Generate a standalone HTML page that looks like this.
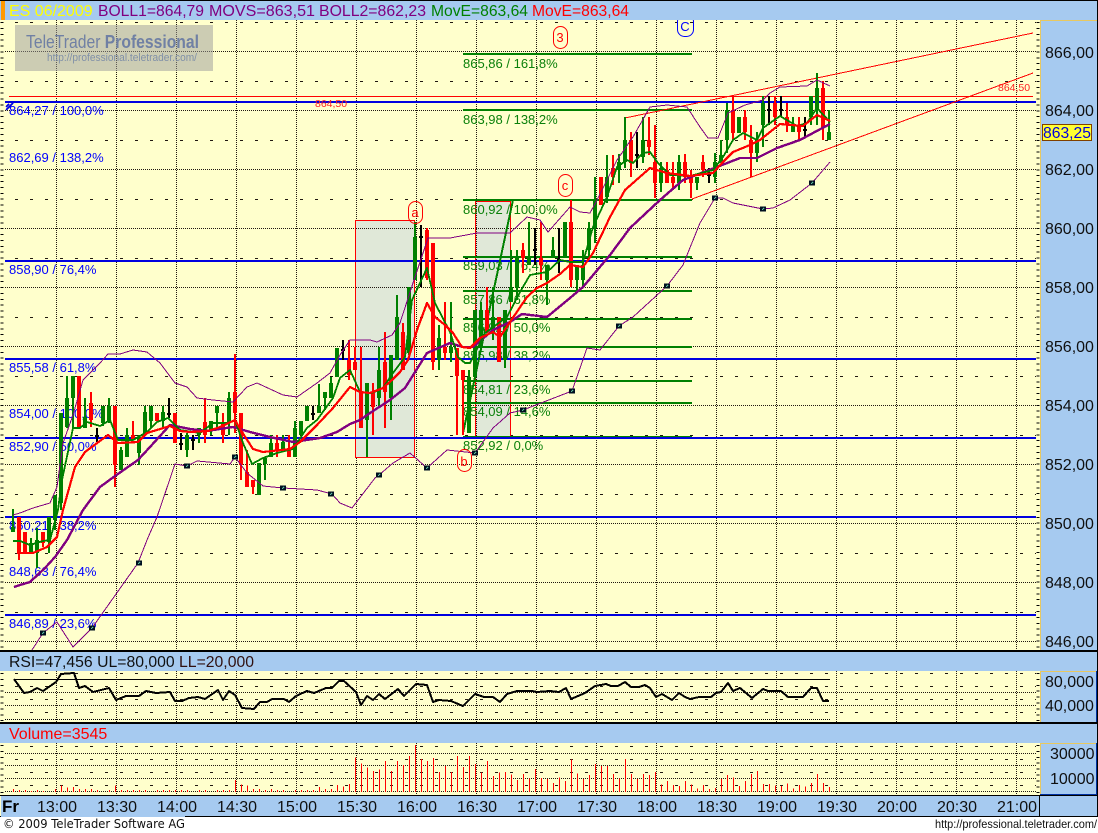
<!DOCTYPE html>
<html><head><meta charset="utf-8"><title>ES 06/2009</title>
<style>
html,body{margin:0;padding:0;background:#fff;}
svg{display:block;}
text{font-family:"Liberation Sans",sans-serif;}
.l{fill:none;shape-rendering:crispEdges;}
.s{fill:none;shape-rendering:crispEdges;stroke-linejoin:round;}
</style></head><body>
<svg width="1098" height="833" viewBox="0 0 1098 833" xmlns="http://www.w3.org/2000/svg">
<rect width="1098" height="833" fill="#fff"/>
<rect x="0" y="0" width="1098" height="817" fill="#FFFFCC"/>
<!-- main grid -->
<path class="l" stroke="#201810" stroke-dasharray="1 1" d="M56.5 20V650M116.5 20V650M176.5 20V650M236.5 20V650M296.5 20V650M356.5 20V650M416.5 20V650M476.5 20V650M536.5 20V650M596.5 20V650M656.5 20V650M716.5 20V650M776.5 20V650M836.5 20V650M896.5 20V650M956.5 20V650M1016.5 20V650M5 51.5H1036M5 110.5H1036M5 169.5H1036M5 228.5H1036M5 287.5H1036M5 346.5H1036M5 405.5H1036M5 464.5H1036M5 523.5H1036M5 582.5H1036M5 641.5H1036"/>
<path class="l" stroke="#201810" stroke-dasharray="3 12" d="M15 22.5H1036M15 81.5H1036M15 140.5H1036M15 199.5H1036M15 258.5H1036M15 317.5H1036M15 376.5H1036M15 435.5H1036M15 494.5H1036M15 553.5H1036M15 612.5H1036"/>
<line class="l" x1="2" y1="22" x2="2" y2="650" stroke="#000" stroke-width="3" stroke-dasharray="1 4.89"/>
<line class="l" x1="1038" y1="22" x2="1038" y2="650" stroke="#000" stroke-width="3" stroke-dasharray="1 4.89"/>
<!-- watermark -->
<rect x="15" y="25" width="198" height="46" fill="#999" opacity=".5"/>
<text x="26" y="48" font-size="18" fill="#7080A4" textLength="173" lengthAdjust="spacingAndGlyphs">TeleTrader <tspan font-weight="bold">Professional</tspan></text>
<text x="47" y="61" font-size="11" fill="#8090A8" textLength="150" lengthAdjust="spacingAndGlyphs">http://professional.teletrader.com/</text>
<!-- shaded rectangles -->
<rect x="355.5" y="220.5" width="59" height="237" fill="#E0E8D8" stroke="#FF0000" shape-rendering="crispEdges"/>
<rect x="475.5" y="201.5" width="35" height="235" fill="#E0E8D8" stroke="#FF0000" shape-rendering="crispEdges"/>
<path class="l" stroke="#201810" stroke-dasharray="1 1" d="M416.5 220V457M476.5 201V437M356 228.5H414M356 287.5H414M356 346.5H414M356 405.5H414M476 228.5H510M476 287.5H510M476 346.5H510M476 405.5H510"/>
<!-- fib labels blue -->
<g font-size="13" fill="#0000FF">
<text x="9" y="115">864,27 / 100,0%</text>
<text x="9" y="162">862,69 / 138,2%</text>
<text x="9" y="274">858,90 / 76,4%</text>
<text x="9" y="372">855,58 / 61,8%</text>
<text x="9" y="418">854,00 / 100,0%</text>
<text x="9" y="451">852,90 / 50,0%</text>
<text x="9" y="530">850,21 / 38,2%</text>
<text x="9" y="576">848,63 / 76,4%</text>
<text x="9" y="628">846,89 / 23,6%</text>
</g>
<!-- fib labels green -->
<g font-size="13" fill="#0A800A">
<text x="463" y="68">865,86 / 161,8%</text>
<text x="463" y="124">863,98 / 138,2%</text>
<text x="463" y="214">860,92 / 100,0%</text>
<text x="463" y="270">859,03 / 76,4%</text>
<text x="463" y="304">857,86 / 61,8%</text>
<text x="463" y="332">856,92 / 50,0%</text>
<text x="463" y="360">855,98 / 38,2%</text>
<text x="463" y="394">854,81 / 23,6%</text>
<text x="463" y="416">854,09 / 14,6%</text>
<text x="463" y="450">852,92 / 0,0%</text>
</g>
<!-- fib lines -->
<path class="l" stroke="#008000" stroke-width="2" d="M463 54H692M463 110H692M463 200H692M463 257H692M463 291H692M463 319H692M463 347H692M463 381H692M463 403H692M463 437H692"/>
<!-- blue lines -->
<path class="l" stroke="#0000E0" stroke-width="2" d="M5 102H1036M5 261H1036M5 359H1036M5 438H1036M5 517H1036M5 615H1036"/>
<path class="l" stroke="#0000E0" stroke-width="2" d="M6 110L13 103M6 107L9 104"/>
<!-- red lines -->
<path class="l" stroke="#FF0000" d="M9 96.5H1033M625 118L1033 33M692 199L1033 73"/>
<path class="l" stroke="#008000" stroke-width="2" d="M463 433L513 200"/>
<text x="315" y="107" font-size="10.5" fill="#FF2020">864,50</text>
<text x="998" y="91" font-size="10.5" fill="#FF2020">864,50</text>
<!-- candles: wicks -->
<path class="l" stroke="#008000" stroke-width="2" d="M13 509V532M31 538V553M37 528V568M49 517V553M55 495V530M61 413V510M67 376V428M73 376V428M85 398V428M103 406V426M109 398V423M121 447V470M127 428V457M139 435V465M145 406V435M151 406V428M163 406V428M187 433V457M199 428V443M211 421V435M217 406V428M229 392V435M259 463V495M265 458V480M271 435V457M283 435V450M295 421V457M301 421V435M307 406V421M319 384V413M325 392V410M331 377V398M337 348V377M367 383V457M379 347V407M391 355V420M397 295V360M409 287V355M415 222V280M439 325V370M451 302V362M469 370V433M475 310V377M481 302V347M493 287V340M505 310V368M511 250V302M517 250V300M529 222V265M547 265V305M553 237V258M565 222V258M577 265V290M583 250V287M589 222V258M595 177V243M607 155V203M619 154V183M625 117V168M643 117V163M661 162V192M679 155V190M697 177V190M715 153V183M721 140V163M727 103V153M739 117V133M757 132V162M763 96V147M793 117V132M811 96V125M817 73V125M829 110V140"/>
<path class="l" stroke="#008000" stroke-width="4" d="M13 527V532M31 543V553M37 540V553M49 517V542M55 495V520M61 413V503M67 398V427M73 376V398M85 417V428M103 406V423M109 406V422M121 450V470M127 435V457M139 437V453M145 412V433M151 406V421M163 412V421M187 435V450M199 428V435M211 421V430M217 406V413M229 398V423M259 463V495M265 458V464M271 443V457M283 442V450M295 428V457M301 421V435M307 406V421M319 406V413M325 392V398M331 383V398M337 348V377M367 383V420M379 370V398M391 355V398M397 317V360M409 287V353M415 237V280M439 338V360M451 347V353M469 377V433M475 310V377M481 310V347M493 317V333M505 310V360M511 287V302M517 258V288M529 258V265M547 265V280M553 250V258M565 222V258M577 265V280M583 265V280M589 228V250M595 200V228M607 177V197M619 162V170M625 140V162M643 140V157M661 168V183M679 162V183M697 177V183M715 162V177M721 155V163M727 110V140M739 117V133M757 140V153M763 103V125M793 125V132M811 96V117M817 88V110M829 132V140"/>
<path class="l" stroke="#FF0000" stroke-width="2" d="M19 517V560M25 532V553M43 532V547M79 376V428M91 392V427M115 406V487M133 421V440M157 413V421M175 413V443M205 398V443M223 413V443M235 354V433M241 413V480M247 450V487M253 480V494M277 435V457M289 435V457M349 340V380M355 347V370M361 347V428M373 383V435M385 332V428M403 323V370M427 228V280M433 243V370M445 302V360M457 348V435M463 370V435M487 287V333M499 317V362M523 243V273M541 222V280M571 200V287M601 177V205M613 155V185M631 132V177M649 117V155M655 125V198M667 162V183M673 162V190M685 154V183M691 170V198M703 155V177M733 96V140M745 110V140M751 125V177M775 96V125M787 103V132M799 117V140M823 81V140"/>
<path class="l" stroke="#FF0000" stroke-width="4" d="M19 517V553M25 532V553M43 532V543M79 376V428M91 403V420M115 406V465M133 435V440M157 413V421M175 413V443M205 422V435M223 422V435M235 392V413M241 413V465M247 472V487M253 480V487M277 443V450M289 450V457M349 360V375M355 362V370M361 392V428M373 392V407M385 362V392M403 332V370M427 230V278M433 243V362M445 347V353M457 348V376M463 370V380M487 310V332M499 317V362M523 250V258M541 258V265M571 222V280M601 177V205M613 168V177M631 140V163M649 140V147M655 162V183M667 170V183M673 177V183M685 162V177M691 177V183M703 162V170M733 110V133M745 117V132M751 140V153M775 103V117M787 117V125M799 125V132M823 88V128"/>
<path class="l" stroke="#000" stroke-width="2" d="M97 428V442M169 398V418M181 433V450M193 435V450M313 406V420M343 340V360M421 225V287M535 228V265M559 228V273M637 132V168M709 168V183M769 96V125M781 96V117M805 117V138"/>
<path class="l" stroke="#000" stroke-width="2" d="M95 436H99M167 414H171M179 444H183M191 440H195M311 414H315M341 350H345M419 237H423M533 250H537M557 260H561M635 155H639M707 175H711M767 110H771M779 110H783M803 130H807"/>
<!-- bollinger -->
<path class="s" stroke="#800080" d="M13 515L20 513L33 508L50 503L57 487L63 443L73 415L83 380L100 363L108 354L120 354L133 350L147 352L160 363L175 383L187 387L197 398L213 400L233 402L247 387L257 383L283 395L297 397L317 383L330 373L340 355L350 340L370 340L377 342L392 335L400 323L413 283L428 238L450 238L477 233L510 233L527 217L540 220L548 232L570 207L580 212L590 213L597 200L606 182L617 160L633 137L650 107L667 105L687 107L700 127L708 138L718 138L728 113L745 105L763 100L770 93L780 87L807 86L817 80L830 86"/>
<path class="s" stroke="#800080" d="M32 650L43 633L57 622L73 647L92 628L138 563L147 540L157 517L175 464L187 466L197 461L230 464L235 457L247 473L263 486L283 488L317 490L332 494L340 503L352 508L375 478L379 475L393 463L410 453L427 468L447 450L475 453L493 428L510 413L523 410L572 391L587 348L600 350L619 326L633 317L667 286L683 265L700 223L715 198L723 198L733 203L763 209L773 208L790 200L812 183L830 162"/>
<!-- MAs -->
<path class="s" stroke="#800080" stroke-width="2.4" d="M14 587L20 585L30 582L45 568L55 557L67 540L83 510L100 487L115 476L138 460L150 447L170 425L190 429L207 431L233 427L250 432L270 437L293 442L320 438L337 432L350 424L360 420L370 413L390 400L405 388L427 353L450 343L463 347L473 347L493 330L510 322L522 314L547 317L570 298L583 287L610 255L630 228L660 200L683 180L717 167L740 158L757 158L777 148L800 140L813 133L830 124"/>
<path class="s" stroke="#008000" stroke-width="1.8" d="M13 541L20 541L30 545L43 541L50 540L58 510L62 480L73 428L80 428L87 422L100 426L110 420L118 440L133 440L147 432L157 422L168 418L180 430L200 433L213 423L227 423L235 420L243 443L252 464L263 458L277 453L293 449L307 428L317 420L333 398L340 378L350 370L360 392L372 393L383 388L393 373L405 357L412 300L427 268L435 303L450 332L458 357L465 363L470 363L485 333L507 317L520 292L530 275L547 272L560 260L570 262L583 262L593 227L607 197L617 167L627 160L633 163L643 153L650 152L658 163L670 175L690 176L713 170L723 157L733 140L743 133L757 140L763 128L780 116L797 126L807 123L817 108L830 122"/>
<path class="s" stroke="#FF0000" stroke-width="2.2" d="M17 553L33 553L47 547L57 537L63 510L75 467L85 452L108 435L118 443L138 442L147 433L170 426L180 431L190 432L208 431L220 427L235 420L242 432L253 449L263 452L290 449L300 442L317 425L333 408L350 387L360 392L370 393L383 388L392 380L400 372L408 360L417 330L427 303L435 317L445 325L453 333L462 347L470 348L480 338L493 332L500 337L510 322L527 297L537 288L547 283L560 274L570 265L583 267L593 253L610 217L625 190L650 168L667 173L690 176L713 173L722 163L733 152L750 145L760 140L780 124L803 126L817 115L830 121"/>
<!-- markers -->
<path class="l" stroke="#001020" stroke-width="5" d="M40 633h6M89 628h6M136 563h6M184 466h6M232 457h6M280 488h6M328 494h6M376 475h6M424 468h6M472 453h6M520 410h6M569 391h6M616 326h6M664 286h6M712 198h6M760 209h6M809 183h6"/>
<path class="l" stroke="#60C0A0" d="M42 634l2-2M91 629l2-2M138 564l2-2M186 467l2-2M234 458l2-2M282 489l2-2M330 495l2-2M378 476l2-2M426 469l2-2M474 454l2-2M522 411l2-2M571 392l2-2M618 327l2-2M666 287l2-2M714 199l2-2M762 210l2-2M811 184l2-2"/>
<!-- wave labels -->
<g fill="none" stroke="#FF0000">
<rect x="408.5" y="201.5" width="14" height="22" rx="7"/>
<rect x="457.5" y="449.5" width="14" height="22" rx="7"/>
<rect x="558.5" y="174.5" width="14" height="22" rx="7"/>
<rect x="553.5" y="26.5" width="14" height="22" rx="7"/>
<rect x="677.5" y="14.5" width="16" height="22" rx="7" stroke="#0000FF"/>
</g>
<g font-size="13" fill="#FF0000" text-anchor="middle">
<text x="415" y="217">a</text><text x="464" y="466">b</text><text x="565" y="190">c</text><text x="560" y="42">3</text>
<text x="685" y="31" fill="#0000FF">C</text>
</g>
<!-- top header -->
<rect x="0" y="0" width="1098" height="20" fill="#A6CAF0"/>
<rect x="1" y="1" width="4" height="19" fill="#FF9900"/>
<rect x="0" y="0" width="1098" height="1" fill="#000"/>
<g font-size="16">
<text x="9" y="16" fill="#FFFF00">ES 06/2009</text>
<text x="98" y="16" fill="#800080" textLength="106" lengthAdjust="spacingAndGlyphs">BOLL1=864,79</text>
<text x="209" y="16" fill="#800080" textLength="106" lengthAdjust="spacingAndGlyphs">MOVS=863,51</text>
<text x="319" y="16" fill="#800080" textLength="107" lengthAdjust="spacingAndGlyphs">BOLL2=862,23</text>
<text x="431" y="16" fill="#008000" textLength="97" lengthAdjust="spacingAndGlyphs">MovE=863,64</text>
<text x="532" y="16" fill="#FF0000" textLength="97" lengthAdjust="spacingAndGlyphs">MovE=863,64</text>
</g>
<!-- right axis main -->
<rect x="1040" y="20" width="57" height="631" fill="#A6CAF0"/>
<path class="l" stroke="#E8C860" d="M1040 20.5H1097M1040.5 20V650"/>
<g font-size="16" fill="#101010">
<text x="1045" y="58">866,00</text>
<text x="1045" y="116">864,00</text>
<text x="1045" y="175">862,00</text>
<text x="1045" y="234">860,00</text>
<text x="1045" y="293">858,00</text>
<text x="1045" y="352">856,00</text>
<text x="1045" y="411">854,00</text>
<text x="1045" y="470">852,00</text>
<text x="1045" y="529">850,00</text>
<text x="1045" y="588">848,00</text>
<text x="1045" y="647">846,00</text>
</g>
<rect x="1042.5" y="124.5" width="49" height="16" fill="#FFFF33" stroke="#804000" shape-rendering="crispEdges"/>
<text x="1043" y="138" font-size="16" fill="#0000E0" textLength="48" lengthAdjust="spacingAndGlyphs">863,25</text>
<!-- RSI panel -->
<rect x="0" y="650" width="1098" height="2" fill="#000"/>
<rect x="0" y="652" width="1098" height="19" fill="#A6CAF0"/>
<text x="9" y="667" font-size="16" fill="#101010" textLength="245" lengthAdjust="spacingAndGlyphs">RSI=47,456 UL=80,000 <tspan fill="#301010">LL=20,000</tspan></text>
<rect x="0" y="671" width="1040" height="52" fill="#FFFFCC"/>
<path class="l" stroke="#201810" stroke-dasharray="1 1" d="M56.5 671V722M116.5 671V722M176.5 671V722M236.5 671V722M296.5 671V722M356.5 671V722M416.5 671V722M476.5 671V722M536.5 671V722M596.5 671V722M656.5 671V722M716.5 671V722M776.5 671V722M836.5 671V722M896.5 671V722M956.5 671V722M1016.5 671V722M5 692.5H1036M5 705.5H1036"/>
<path class="l" stroke="#201810" stroke-dasharray="3 12" d="M15 673.5H1036M15 686.5H1036M15 699.5H1036M15 712.5H1036"/>
<line class="l" x1="2" y1="673" x2="2" y2="722" stroke="#000" stroke-width="3" stroke-dasharray="1 4.9"/>
<line class="l" x1="1038" y1="673" x2="1038" y2="722" stroke="#000" stroke-width="3" stroke-dasharray="1 4.9"/>
<path class="l" stroke="#000" d="M14 679.5H830"/>
<path class="l" stroke="#000" stroke-dasharray="1 1" d="M5 719.5H830"/>
<path class="s" stroke="#000" stroke-width="2" d="M14 679L24 693L30 692L37 688L43 691L56 682L61 674L74 673L79 688L85 686L93 692L109 688L116 700L126 696L139 696L146 691L156 693L170 692L175 701L182 701L189 698L198 697L205 699L218 690L223 700L229 691L235 695L242 708L254 709L260 702L267 702L272 699L284 699L289 702L296 696L307 691L314 693L326 688L332 688L339 681L344 681L356 692L361 705L367 696L373 700L379 694L385 699L398 689L404 696L416 684L427 685L433 702L439 700L451 701L463 706L475 694L484 697L493 697L500 702L507 694L517 691L532 691L537 692L550 691L559 692L566 688L571 699L585 693L595 686L606 684L611 686L618 686L625 682L631 687L639 687L645 685L650 688L656 697L662 694L672 700L679 693L685 697L690 699L699 697L711 697L716 693L721 692L728 683L733 691L740 688L752 698L763 689L768 691L781 691L788 697L803 697L811 688L817 688L823 701L829 701"/>
<rect x="1040" y="671" width="57" height="52" fill="#A6CAF0"/>
<path class="l" stroke="#E8C860" d="M1040 671.5H1097M1040.5 671V723"/>
<path class="l" stroke="#0030A0" d="M1096.5 671V723"/>
<text x="1045" y="687" font-size="16" fill="#101010">80,000</text>
<text x="1045" y="711" font-size="16" fill="#101010">40,000</text>
<!-- Volume panel -->
<rect x="0" y="722" width="1098" height="2" fill="#000"/>
<rect x="0" y="724" width="1098" height="19" fill="#A6CAF0"/>
<text x="9" y="739" font-size="16" fill="#FF0000">Volume=3545</text>
<rect x="0" y="743" width="1040" height="52" fill="#FFFFCC"/>
<path class="l" stroke="#201810" stroke-dasharray="1 1" d="M56.5 743V795M116.5 743V795M176.5 743V795M236.5 743V795M296.5 743V795M356.5 743V795M416.5 743V795M476.5 743V795M536.5 743V795M596.5 743V795M656.5 743V795M716.5 743V795M776.5 743V795M836.5 743V795M896.5 743V795M956.5 743V795M1016.5 743V795M5 753.5H1036M5 765.5H1036M5 778.5H1036M5 791.5H1036"/>
<path class="l" stroke="#201810" stroke-dasharray="3 12" d="M15 746.5H1036M15 759.5H1036M15 772.5H1036M15 785.5H1036"/>
<line class="l" x1="2" y1="745" x2="2" y2="795" stroke="#000" stroke-width="3" stroke-dasharray="1 4.9"/>
<line class="l" x1="1038" y1="745" x2="1038" y2="795" stroke="#000" stroke-width="3" stroke-dasharray="1 4.9"/>
<path class="l" stroke="#FF0000" d="M13.5 789V792M19.5 790V792M25.5 790V792M31.5 791V792M37.5 790V792M43.5 791V792M55.5 789V792M61.5 785.7V792M67.5 787.7V792M73.5 787V792M79.5 789V792M85.5 789V792M91.5 789V792M97.5 790V792M109.5 790V792M115.5 785.7V792M121.5 790V792M127.5 790V792M133.5 790V792M139.5 790V792M145.5 790V792M157.5 790V792M163.5 790V792M169.5 790V792M175.5 790V792M181.5 790V792M187.5 790V792M199.5 790V792M205.5 790V792M217.5 790V792M223.5 790V792M229.5 790V792M235.5 780V792M241.5 784.3V792M247.5 785.7V792M253.5 789V792M259.5 789V792M265.5 790V792M271.5 789V792M277.5 790V792M283.5 790V792M295.5 790V792M301.5 790V792M307.5 790V792M313.5 790V792M319.5 787V792M325.5 789V792M331.5 789V792M337.5 785V792M343.5 786.7V792M349.5 784V792M355.5 757.7V792M361.5 763.3V792M367.5 767.7V792M373.5 771V792M379.5 769.3V792M385.5 761V792M391.5 771V792M397.5 761V792M403.5 765V792M409.5 756V792M415.5 745V792M421.5 759V792M427.5 761V792M433.5 758V792M439.5 772V792M445.5 766V792M451.5 772V792M457.5 756V792M463.5 767V792M469.5 756V792M475.5 764V792M481.5 772.3V792M487.5 761V792M493.5 776V792M499.5 772.3V792M505.5 772V792M511.5 774.3V792M517.5 780V792M523.5 774V792M529.5 778.3V792M535.5 769V792M541.5 778V792M547.5 779V792M553.5 783V792M559.5 777.3V792M565.5 781V792M571.5 759.3V792M577.5 773.3V792M583.5 779V792M589.5 775V792M595.5 764V792M601.5 766V792M607.5 766V792M613.5 774V792M619.5 778.3V792M625.5 759V792M631.5 774V792M637.5 779V792M643.5 774V792M649.5 775V792M655.5 772V792M661.5 784.7V792M667.5 781V792M673.5 785V792M679.5 786V792M685.5 781V792M691.5 784.3V792M697.5 788.3V792M703.5 785V792M709.5 789V792M715.5 788V792M721.5 779V792M727.5 775V792M733.5 777.3V792M739.5 786V792M745.5 781V792M751.5 774V792M757.5 771V792M763.5 784V792M769.5 784V792M775.5 785.3V792M781.5 786V792M787.5 783.3V792M793.5 788.3V792M799.5 785V792M805.5 786.7V792M811.5 783V792M817.5 774V792M823.5 783V792M829.5 787V792"/>
<rect x="1040" y="743" width="57" height="52" fill="#A6CAF0"/>
<path class="l" stroke="#E8C860" d="M1040 743.5H1097M1040.5 743V794"/>
<path class="l" stroke="#0030A0" d="M1096.5 743V794M1040 794.5H1097"/>
<text x="1050" y="759" font-size="16" fill="#101010">30000</text>
<text x="1050" y="784" font-size="16" fill="#101010">10000</text>
<!-- time axis -->
<rect x="1" y="796" width="1097" height="20" fill="#A6CAF0"/>
<path class="l" stroke="#000" d="M0 795.5H1098M0 816.5H1098M1039.5 796V816"/>
<text x="2" y="812" font-size="17" font-weight="bold" fill="#000">Fr</text>
<g font-size="16" fill="#101010" text-anchor="middle">
<text x="57" y="812">13:00</text><text x="117" y="812">13:30</text><text x="177" y="812">14:00</text><text x="237" y="812">14:30</text><text x="297" y="812">15:00</text><text x="357" y="812">15:30</text><text x="417" y="812">16:00</text><text x="477" y="812">16:30</text><text x="537" y="812">17:00</text><text x="597" y="812">17:30</text><text x="657" y="812">18:00</text><text x="717" y="812">18:30</text><text x="777" y="812">19:00</text><text x="837" y="812">19:30</text><text x="897" y="812">20:00</text><text x="957" y="812">20:30</text><text x="1017" y="812">21:00</text>
</g>
<rect x="0" y="817" width="1098" height="16" fill="#fff"/>
<rect x="1" y="816" width="184" height="1" fill="#A6CAF0"/>
<rect x="1097" y="0" width="1" height="817" fill="#000"/>
<text x="3" y="828" font-size="12" fill="#101010" style="font-family:'DejaVu Sans',sans-serif" textLength="182" lengthAdjust="spacingAndGlyphs">© 2009 TeleTrader Software AG</text>
<text x="935" y="828" font-size="12" fill="#101010" textLength="162" lengthAdjust="spacingAndGlyphs">http://professional.teletrader.com/</text>
</svg>
</body></html>
